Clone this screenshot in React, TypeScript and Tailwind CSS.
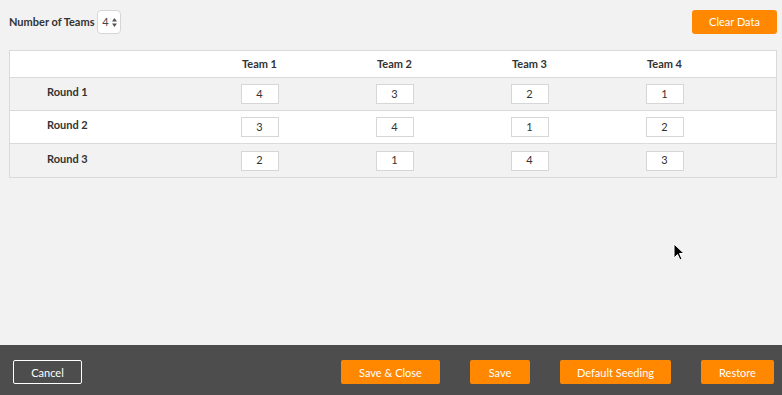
import React from "react";

const teams = ["Team 1", "Team 2", "Team 3", "Team 4"];
const rounds: { name: string; vals: number[] }[] = [
  { name: "Round 1", vals: [4, 3, 2, 1] },
  { name: "Round 2", vals: [3, 4, 1, 2] },
  { name: "Round 3", vals: [2, 1, 4, 3] },
];

const font = { fontFamily: "Lato, 'Open Sans', Arial, sans-serif" };

export default function App() {
  return (
    <div
      className="relative w-[782px] h-[395px] bg-[#f2f2f2] flex flex-col text-[#333] overflow-hidden"
      style={font}
    >
      <div className="flex-1 flex flex-col pl-[9px] pr-[5px] pt-[10px]">
        <div className="flex items-center justify-between">
          <div className="flex items-center gap-[3px]">
            <span className="text-[11px] font-bold text-[#333]">Number of Teams</span>
            <div className="w-[24px] h-[24px] bg-white border border-[#d6d6d6] rounded-[4px] flex items-center justify-center gap-[3px] text-[11px] text-[#444]">
              <span>4</span>
              <svg width="5" height="9" viewBox="0 0 5 9">
                <path d="M2.5 0 L5 3.5 L0 3.5 Z" fill="#555" />
                <path d="M2.5 9 L5 5.5 L0 5.5 Z" fill="#555" />
              </svg>
            </div>
          </div>
          <button className="w-[85px] h-[24px] bg-[#ff8800] rounded-[3px] text-white text-[11px]">
            Clear Data
          </button>
        </div>

        <div className="mt-[16px] w-[768px] border border-[#dadada] bg-white">
          <div className="grid grid-cols-[182px_135px_135px_135px_135px_1fr] h-[27px] items-center border-b border-[#dadada] bg-white">
            <div />
            {teams.map((t) => (
              <div key={t} className="text-center text-[11px] font-bold text-[#333]">
                {t}
              </div>
            ))}
            <div />
          </div>
          {rounds.map((r, i) => (
            <div
              key={r.name}
              className={
                "grid grid-cols-[182px_135px_135px_135px_135px_1fr] h-[33px] items-center " +
                (i % 2 === 0 ? "bg-[#f2f2f2]" : "bg-white") +
                (i < rounds.length - 1 ? " border-b border-[#dadada]" : "")
              }
            >
              <div className="pl-[37px] text-[11px] font-bold text-[#333] -mt-[3px]">{r.name}</div>
              {r.vals.map((v, j) => (
                <div key={j} className="flex justify-center">
                  <div className="w-[38px] h-[20px] bg-white border border-[#d6d6d6] flex items-center justify-center text-[11px] text-[#333]">
                    {v}
                  </div>
                </div>
              ))}
              <div />
            </div>
          ))}
        </div>
      </div>

      <div className="h-[50px] bg-[#4d4d4d] flex items-start pt-[15px] pl-[13px] pr-[8px]">
        <button className="w-[69px] h-[24px] border border-white rounded-[2px] text-white text-[11px] pt-[2px]">
          Cancel
        </button>
        <div className="flex-1" />
        <button className="w-[99px] h-[24px] bg-[#ff8800] rounded-[2px] text-white text-[11px] pt-[2px]">
          Save &amp; Close
        </button>
        <button className="ml-[30px] w-[60px] h-[24px] bg-[#ff8800] rounded-[2px] text-white text-[11px] pt-[2px]">
          Save
        </button>
        <button className="ml-[30px] w-[111px] h-[24px] bg-[#ff8800] rounded-[2px] text-white text-[11px] pt-[2px]">
          Default Seeding
        </button>
        <button className="ml-[30px] w-[73px] h-[24px] bg-[#ff8800] rounded-[2px] text-white text-[11px] pt-[2px]">
          Restore
        </button>
      </div>

      <svg
        className="absolute left-[673px] top-[243px]"
        width="12"
        height="19"
        viewBox="0 0 12 19"
      >
        <path
          d="M1 1 L1 15 L4.5 11.5 L7 17 L9 16 L6.5 10.5 L11 10.5 Z"
          fill="#000"
          stroke="#fff"
          strokeWidth="1"
        />
      </svg>
    </div>
  );
}
